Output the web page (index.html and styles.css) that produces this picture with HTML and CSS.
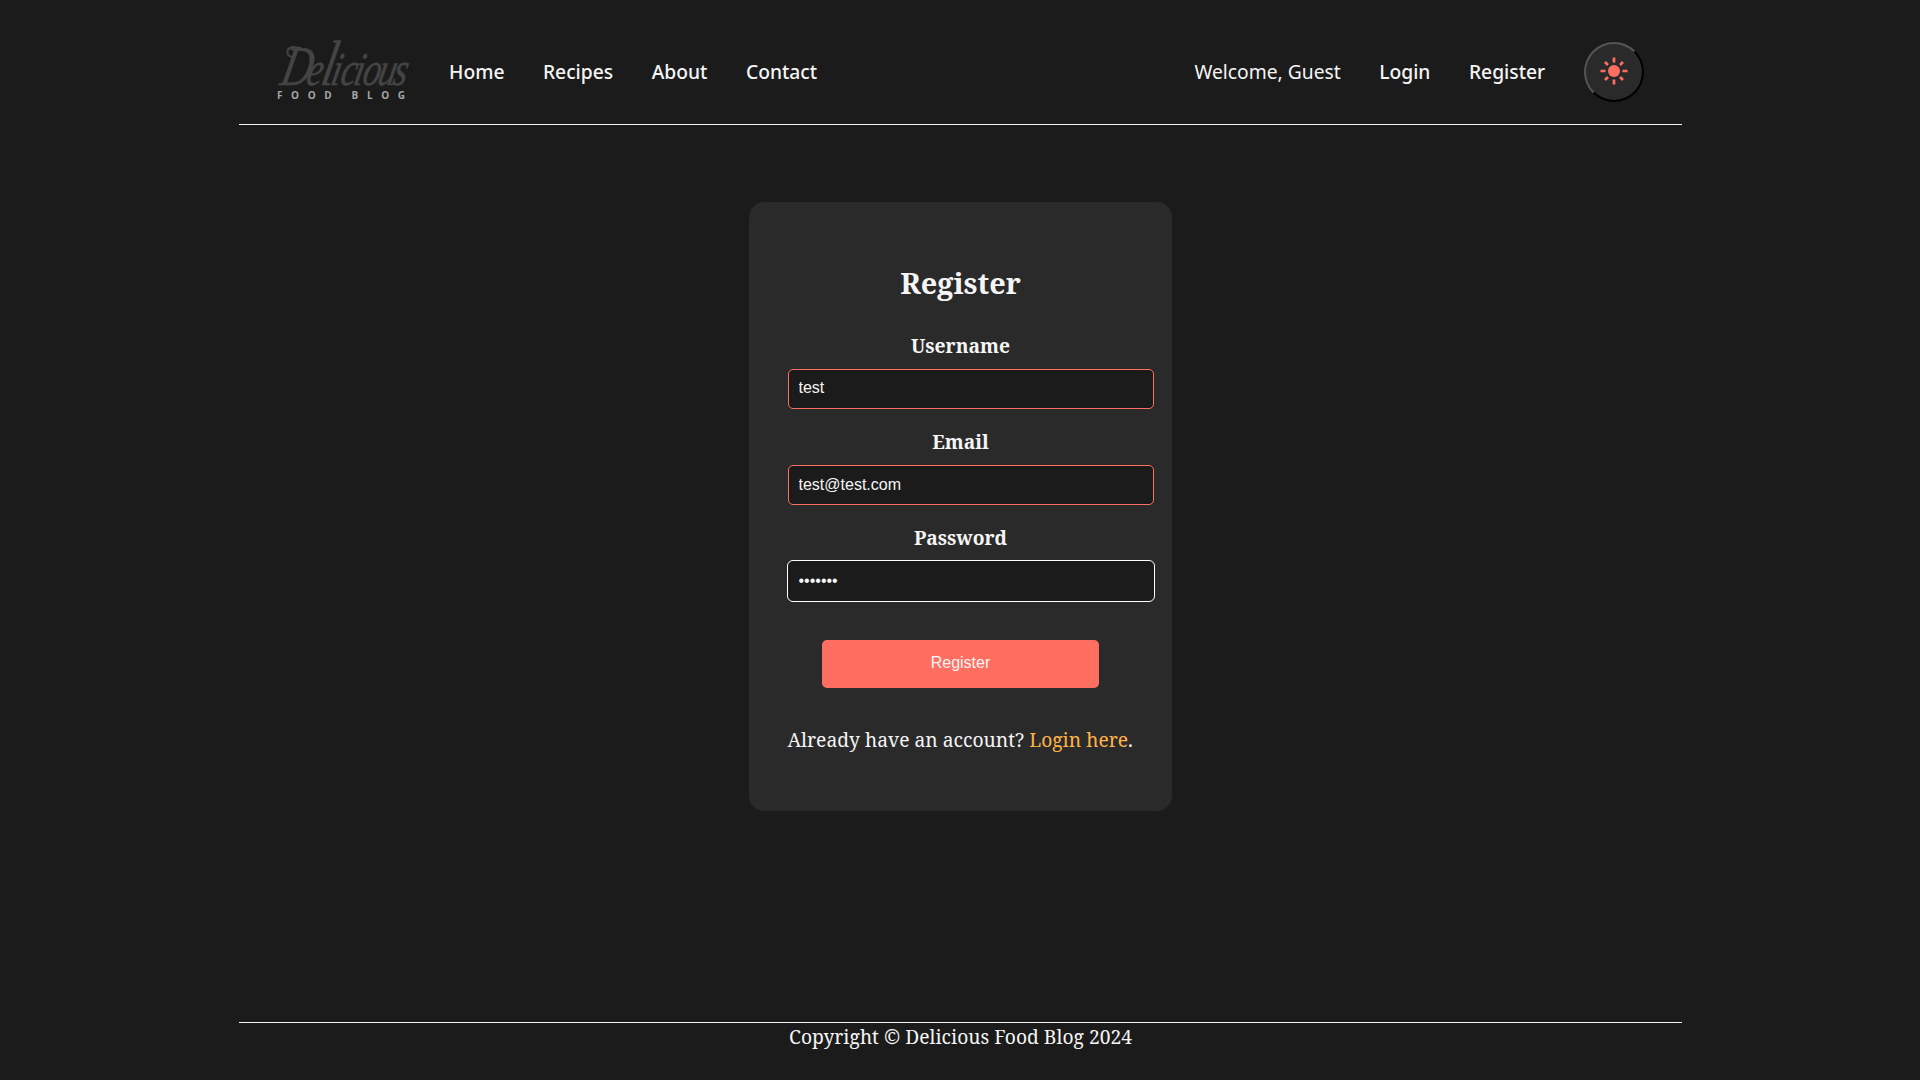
FILE: index.html
```html
<!DOCTYPE html>
<html lang="en">
<head>
<meta charset="utf-8">
<title>Register - Delicious Food Blog</title>
<link rel="stylesheet" href="styles.css">
</head>
<body>
<header class="site-header">
  <a class="logo" href="#" aria-label="Delicious Food Blog">
    <svg width="150" height="73" viewBox="0 0 150 73">
      <g transform="translate(2 50) skewX(-12) scale(.76 1)">
        <text class="logo-script"><tspan class="logo-cap" x="0">D</tspan><tspan x="34">e</tspan><tspan class="logo-tall" x="53">l</tspan><tspan x="66 79 96 108 128 148">icious</tspan></text>
      </g>
      <path class="flourish" d="M16 22C9 22 8 13 16 12L24 13"/>
      <text class="logo-sub" x="0" y="64" textLength="128">FOOD BLOG</text>
    </svg>
  </a>
  <nav class="nav">
    <a href="#">Home</a><a href="#">Recipes</a><a href="#">About</a><a href="#">Contact</a>
  </nav>
  <nav class="nav account">
    <span class="welcome">Welcome, Guest</span><a href="#">Login</a><a href="#">Register</a>
  </nav>
  <button class="theme" type="button" aria-label="Toggle theme">
    <svg width="28" height="28" viewBox="-14 -14 28 28">
      <circle r="6" fill="#ff6f61"/>
      <path d="M0-13.5v5M0 13.5v-5M-13.5 0h5M13.5 0h-5M-9-9l3 3M9-9l-3 3M-9 9l3-3M9 9l-3-3" stroke="#ff6f61" stroke-width="2.7"/>
    </svg>
  </button>
</header>
<main class="main">
  <form class="card">
    <h2>Register</h2>
    <label for="username">Username</label>
    <input id="username" type="text" value="test">
    <label for="email">Email</label>
    <input id="email" class="lower" type="email" value="test@test.com">
    <label for="password">Password</label>
    <input id="password" class="lower focused" type="password" value="testing">
    <button class="submit" type="button">Register</button>
    <p>Already have an account? <a href="#">Login here</a>.</p>
  </form>
</main>
<footer class="site-footer">Copyright © Delicious Food Blog 2024</footer>
</body>
</html>
```
FILE: styles.css
```css
* { box-sizing: border-box; }
body {
  margin: 0 auto;
  width: 1443px;
  height: 1080px;
  display: flex;
  flex-direction: column;
  background: #1b1b1b;
  color: #f5f5f5;
  font: 19.25px/27px "Noto Serif", "Liberation Serif", serif;
}
a { color: inherit; text-decoration: none; }
.site-header {
  height: 125px;
  padding: 19px 38px 0 38px;
  display: flex;
  align-items: center;
  border-bottom: 1px solid #f5f5f5;
}
.logo { display: flex; width: 172.5px; }
.logo svg { overflow: visible; }
.logo-script { font: italic 47px "Liberation Serif", serif; fill: #444; stroke: #444; stroke-width: .5px; }
.logo-cap { font-size: 56px; }
.logo-tall { font-size: 64px; }
.flourish { fill: none; stroke: #444; stroke-width: 2px; }
.logo-sub { font: bold 10px "Open Sans", sans-serif; fill: #a6a6a6; }
.nav { display: flex; gap: 38.5px; font-family: "Noto Sans", sans-serif; font-weight: 500; }
.account { margin-left: auto; }
.welcome { font-weight: 400; }
.theme {
  width: 60px;
  height: 60px;
  margin-left: 38.3px;
  padding: 0 0 1px;
  display: grid;
  place-items: center;
  border: 2px outset #555;
  border-color: #555 #000 #000 #555;
  border-radius: 50%;
  background: #2a2a2a;
}
.main { flex: 1; display: flex; justify-content: center; align-items: flex-start; padding-top: 77px; }
.card {
  width: 423px;
  height: 609px;
  padding: 60px 39px 0;
  border-radius: 15px;
  background: #2a2a2a;
  text-align: center;
}
h2 { margin: 0 0 28px; font-size: 28.9px; line-height: 42px; text-indent: 1px; }
label { display: block; height: 37px; font-weight: 700; text-indent: 1px; }
input {
  display: block;
  width: 366px;
  height: 40px;
  margin: 0 0 19px;
  padding: 0 10px 2px;
  border: 1px solid #ff6f61;
  border-radius: 5px;
  background: #1b1b1b;
  color: #f5f5f5;
  font: 16px "Liberation Sans", sans-serif;
}
.lower { padding-bottom: 0; }
.focused { border-color: #1b1b1b; outline: 1px solid #fff; }
.submit {
  display: block;
  width: 277px;
  height: 48px;
  margin: 39px auto 38px;
  padding: 0 0 2px 1px;
  border: 0;
  border-radius: 5px;
  background: #ff6f61;
  color: #f5f5f5;
  font: 16px "Liberation Sans", sans-serif;
}
p { margin: 0; white-space: nowrap; }
p a { color: #ffb347; }
.site-footer { height: 58px; border-top: 1px solid #f5f5f5; text-align: center; text-indent: 1px; }
```
